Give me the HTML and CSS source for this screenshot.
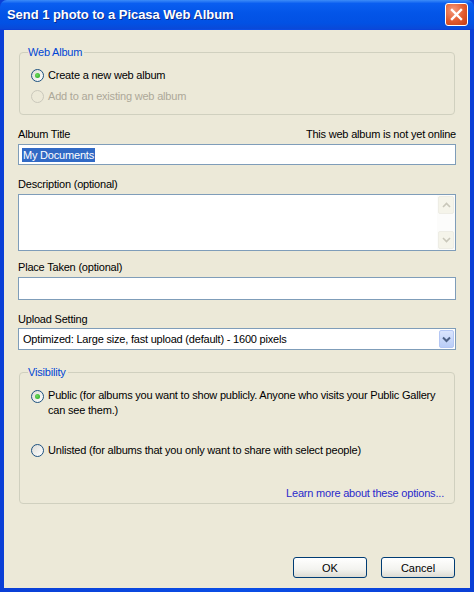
FILE: index.html
```html
<!DOCTYPE html>
<html lang="en">
<head>
    <meta charset="UTF-8">
    <title>Send 1 photo to a Picasa Web Album</title>
    <link rel="stylesheet" href="styles.css">
</head>
<body>
    <div class="window">
        <div class="titlebar">
            <span class="title">Send 1 photo to a Picasa Web Album</span>
            <div class="close-btn">
                <svg width="13" height="13" viewBox="0 0 13 13"><path d="M2 2 L11 11 M11 2 L2 11" stroke="#fff" stroke-width="2.4" stroke-linecap="square"/></svg>
            </div>
        </div>

        <div class="client">
            <fieldset class="group album-group">
                <legend>Web Album</legend>
                <label class="radio-row">
                    <span class="radio checked"></span>
                    <span>Create a new web album</span>
                </label>
                <label class="radio-row disabled">
                    <span class="radio"></span>
                    <span>Add to an existing web album</span>
                </label>
            </fieldset>

            <div class="field title-field">
                <div class="label-row">
                    <span>Album Title</span>
                    <span>This web album is not yet online</span>
                </div>
                <div class="input"><span class="selected">My Documents</span></div>
            </div>

            <div class="field desc-field">
                <div class="label-row"><span>Description (optional)</span></div>
                <div class="input textarea">
                    <div class="text-space"></div>
                    <div class="scrollbar">
                        <div class="arrow">
                            <svg width="9" height="6" viewBox="0 0 9 6"><path d="M1 5 L4.5 1.5 L8 5" fill="none" stroke="#c9c7ba" stroke-width="1.6"/></svg>
                        </div>
                        <div class="track"></div>
                        <div class="arrow">
                            <svg width="9" height="6" viewBox="0 0 9 6"><path d="M1 1 L4.5 4.5 L8 1" fill="none" stroke="#c9c7ba" stroke-width="1.6"/></svg>
                        </div>
                    </div>
                </div>
            </div>

            <div class="field place-field">
                <div class="label-row"><span>Place Taken (optional)</span></div>
                <div class="input tall"></div>
            </div>

            <div class="field upload-field">
                <div class="label-row"><span>Upload Setting</span></div>
                <div class="input select">
                    <span class="select-text">Optimized: Large size, fast upload (default) - 1600 pixels</span>
                    <div class="drop-btn">
                        <svg width="9" height="7" viewBox="0 0 9 7"><path d="M1 1.5 L4.5 5 L8 1.5" fill="none" stroke="#4d6185" stroke-width="2"/></svg>
                    </div>
                </div>
            </div>

            <fieldset class="group visibility-group">
                <legend>Visibility</legend>
                <label class="radio-row top">
                    <span class="radio checked"></span>
                    <span>Public (for albums you want to show publicly. Anyone who visits your Public Gallery can see them.)</span>
                </label>
                <label class="radio-row unlisted">
                    <span class="radio"></span>
                    <span>Unlisted (for albums that you only want to share with select people)</span>
                </label>
                <a href="#" class="learn-link">Learn more about these options...</a>
            </fieldset>

            <div class="buttons">
                <button class="btn">OK</button>
                <button class="btn">Cancel</button>
            </div>
        </div>
    </div>
</body>
</html>
```

FILE: styles.css
```css
    body {
        margin: 0;
        font-family: 'Liberation Sans', Arial, sans-serif;
        font-size: 11px;
        letter-spacing: -0.2px;
        color: #000;
        background: #0842d8;
    }
    .window {
        width: 474px;
        height: 592px;
        display: flex;
        flex-direction: column;
        background: linear-gradient(to right, #0a3fd6, #0a4ee6 50%, #0a3fd6);
        box-sizing: border-box;
    }
    .titlebar {
        height: 29px;
        flex-shrink: 0;
        display: flex;
        align-items: center;
        justify-content: space-between;
        padding: 0 6px 0 7px;
        background: linear-gradient(to bottom, #3d8cf8 0%, #0a5ef0 12%, #0355e8 45%, #0251e4 80%, #0a49d8 100%);
        border-radius: 7px 7px 0 0;
    }
    .title {
        color: #fff;
        font-weight: 700;
        font-size: 13px;
        letter-spacing: -0.05px;
        text-shadow: 1px 1px 0 #0a2a8a;
    }
    .close-btn {
        width: 21px;
        height: 21px;
        border: 1px solid #fff;
        border-radius: 3px;
        background: radial-gradient(circle at 35% 30%, #f49a7c, #e25a2e 55%, #c23c12);
        display: flex;
        align-items: center;
        justify-content: center;
    }
    .client {
        flex: 1;
        margin: 1px 4px 4px 4px;
        background: #ece9d8;
        padding: 16px 14px 0 14px;
        display: flex;
        flex-direction: column;
    }
    .group {
        margin: 0 1px;
        border: 1px solid #d0d0bf;
        border-radius: 4px;
        padding: 0 0 0 11px;
    }
    .group legend {
        color: #0046d5;
        padding: 0 2px 0 0;
        margin-left: -3px;
    }
    .album-group {
        box-sizing: border-box;
        height: 69px;
        padding-top: 10px;
    }
    .radio-row {
        display: flex;
        align-items: flex-start;
        gap: 4px;
        line-height: 14px;
        height: 21px;
    }
    .radio-row.disabled {
        color: #aca899;
    }
    .radio {
        flex-shrink: 0;
        width: 11px;
        height: 11px;
        border: 1px solid #1c5180;
        border-radius: 50%;
        background: linear-gradient(135deg, #dcdcd6, #fff);
        display: flex;
        align-items: center;
        justify-content: center;
        margin-top: 1px;
    }
    .disabled .radio {
        border-color: #cac8bb;
        background: #ece9d8;
    }
    .radio.checked::after {
        content: '';
        width: 5px;
        height: 5px;
        border-radius: 50%;
        background: radial-gradient(circle at 40% 40%, #6fdc5c, #21a121);
    }
    .field {
        display: flex;
        flex-direction: column;
    }
    .label-row {
        display: flex;
        justify-content: space-between;
        height: 14px;
        line-height: 14px;
        margin-bottom: 3px;
    }
    .title-field {
        margin-top: 12px;
    }
    .desc-field {
        margin-top: 12px;
    }
    .place-field {
        margin-top: 9px;
    }
    .upload-field {
        margin-top: 12px;
    }
    .upload-field .label-row {
        margin-bottom: 2px;
    }
    .input {
        height: 21px;
        border: 1px solid #7f9db9;
        background: #fff;
        box-sizing: border-box;
        display: flex;
        align-items: center;
        padding: 0 3px;
    }
    .selected {
        background: #316ac5;
        color: #fff;
        line-height: 14px;
        padding: 0 1px;
    }
    .textarea {
        height: 57px;
        padding: 0;
        align-items: stretch;
    }
    .text-space {
        flex: 1;
    }
    .scrollbar {
        width: 16px;
        display: flex;
        flex-direction: column;
        background: #fcfcfb;
        padding: 1px;
    }
    .scrollbar .arrow {
        height: 16px;
        border: 1px solid #eeede5;
        border-radius: 2px;
        background: #f5f4ea;
        display: flex;
        align-items: center;
        justify-content: center;
    }
    .scrollbar .track {
        flex: 1;
    }
    .tall {
        height: 23px;
    }
    .select {
        height: 22px;
        justify-content: space-between;
        padding: 0 1px 0 4px;
    }
    .drop-btn {
        width: 15px;
        height: 18px;
        border-radius: 2px;
        background: linear-gradient(to bottom, #dae5fd, #b9cdf7);
        border: 1px solid #b4c7f4;
        display: flex;
        align-items: center;
        justify-content: center;
        box-sizing: border-box;
    }
    .visibility-group {
        margin-top: 16px;
        height: 138px;
        box-sizing: border-box;
        padding-top: 10px;
        display: flex;
        flex-direction: column;
    }
    .radio-row.top {
        height: auto;
        line-height: 15px;
    }
    .radio-row.top .radio {
        margin-top: 2px;
    }
    .radio-row.unlisted {
        margin-top: 25px;
    }
    .learn-link {
        align-self: flex-end;
        color: #2a2acc;
        text-decoration: none;
        margin-top: 23px;
        margin-right: 10px;
    }
    .buttons {
        margin-top: auto;
        margin-bottom: 10px;
        display: flex;
        justify-content: flex-end;
        gap: 14px;
        padding-right: 1px;
    }
    .btn {
        font-family: 'Liberation Sans', Arial, sans-serif;
        font-size: 11px;
        width: 74px;
        height: 21px;
        border: 1px solid #003c74;
        border-radius: 3px;
        background: linear-gradient(to bottom, #ffffff, #f3f3ef 60%, #dcdbd2);
        color: #000;
        padding: 0;
    }
```
